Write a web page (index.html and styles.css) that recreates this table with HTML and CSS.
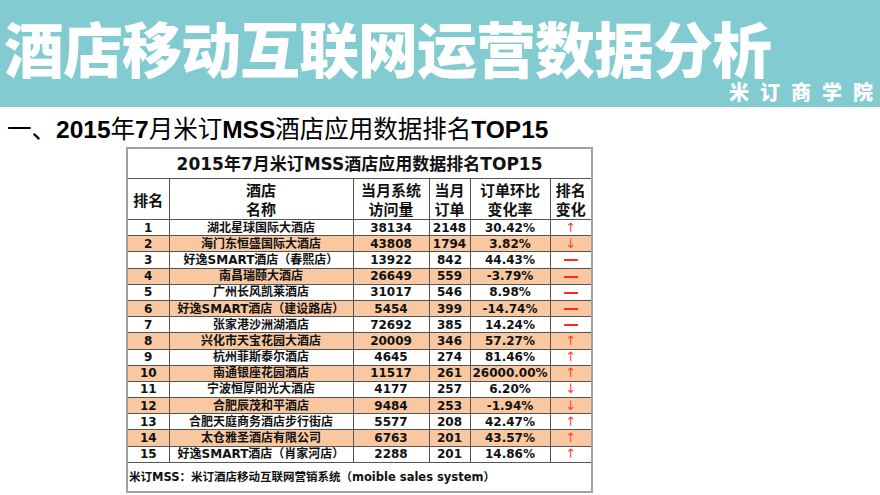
FILE: index.html
```html
<!DOCTYPE html>
<html lang="zh-CN">
<head>
<meta charset="utf-8">
<title>酒店移动互联网运营数据分析</title>
<link rel="stylesheet" href="styles.css">
</head>
<body>
<header class="banner">
  <h1 class="banner-title">酒店移动互联网运营数据分析</h1>
  <div class="banner-brand">米订商学<span class="last">院</span></div>
</header>
<h2 class="section-title">一、<b>2015</b>年<b>7</b>月米订<b>MSS</b>酒店应用数据排名<b>TOP15</b></h2>
<div class="table-wrap">
<table class="rank">
  <colgroup>
    <col class="c-rank"><col class="c-name"><col class="c-visit"><col class="c-order"><col class="c-rate"><col class="c-change">
  </colgroup>
  <thead>
    <tr class="caption-row"><th colspan="6">2015年7月米订MSS酒店应用数据排名TOP15</th></tr>
    <tr class="head-row">
      <th>排名</th><th>酒店<br>名称</th><th>当月系统<br>访问量</th><th>当月<br>订单</th><th>订单环比<br>变化率</th><th>排名<br>变化</th>
    </tr>
  </thead>
  <tbody>
    <tr><td>1</td><td>湖北星球国际大酒店</td><td>38134</td><td>2148</td><td>30.42%</td><td class="chg">↑</td></tr>
    <tr class="alt"><td>2</td><td>海门东恒盛国际大酒店</td><td>43808</td><td>1794</td><td>3.82%</td><td class="chg">↓</td></tr>
    <tr><td>3</td><td>好逸SMART酒店（春熙店）</td><td>13922</td><td>842</td><td>44.43%</td><td class="chg"><span class="dash"></span></td></tr>
    <tr class="alt"><td>4</td><td>南昌瑞颐大酒店</td><td>26649</td><td>559</td><td>-3.79%</td><td class="chg"><span class="dash"></span></td></tr>
    <tr><td>5</td><td>广州长风凯莱酒店</td><td>31017</td><td>546</td><td>8.98%</td><td class="chg"><span class="dash"></span></td></tr>
    <tr class="alt"><td>6</td><td>好逸SMART酒店（建设路店）</td><td>5454</td><td>399</td><td>-14.74%</td><td class="chg"><span class="dash"></span></td></tr>
    <tr><td>7</td><td>张家港沙洲湖酒店</td><td>72692</td><td>385</td><td>14.24%</td><td class="chg"><span class="dash"></span></td></tr>
    <tr class="alt"><td>8</td><td>兴化市天宝花园大酒店</td><td>20009</td><td>346</td><td>57.27%</td><td class="chg">↑</td></tr>
    <tr><td>9</td><td>杭州菲斯泰尔酒店</td><td>4645</td><td>274</td><td>81.46%</td><td class="chg">↑</td></tr>
    <tr class="alt"><td>10</td><td>南通银座花园酒店</td><td>11517</td><td>261</td><td>26000.00%</td><td class="chg">↑</td></tr>
    <tr><td>11</td><td>宁波恒厚阳光大酒店</td><td>4177</td><td>257</td><td>6.20%</td><td class="chg">↓</td></tr>
    <tr class="alt"><td>12</td><td>合肥辰茂和平酒店</td><td>9484</td><td>253</td><td>-1.94%</td><td class="chg">↓</td></tr>
    <tr><td>13</td><td>合肥天庭商务酒店步行街店</td><td>5577</td><td>208</td><td>42.47%</td><td class="chg">↑</td></tr>
    <tr class="alt"><td>14</td><td>太仓雅圣酒店有限公司</td><td>6763</td><td>201</td><td>43.57%</td><td class="chg">↑</td></tr>
    <tr><td>15</td><td>好逸SMART酒店（肖家河店）</td><td>2288</td><td>201</td><td>14.86%</td><td class="chg">↑</td></tr>
  </tbody>
  <tfoot>
    <tr class="note-row"><td colspan="6">米订MSS：米订酒店移动互联网营销系统（moible sales system）</td></tr>
  </tfoot>
</table>
</div>
</body>
</html>
```
FILE: styles.css
```css
html, body {
  margin: 0;
  padding: 0;
  background: #ffffff;
}
body {
  width: 880px;
  height: 495px;
  overflow: hidden;
  font-family: "Liberation Sans", "Noto Sans CJK SC", sans-serif;
  color: #111;
}
.banner {
  height: 107px;
  background: #82cbd1;
  display: flex;
  flex-direction: column;
  box-sizing: border-box;
  padding-top: 18px;
}
.banner-title {
  margin: 0;
  padding-left: 4px;
  font-family: "Noto Sans CJK SC", sans-serif;
  font-weight: 900;
  font-size: 60px;
  line-height: 58px;
  letter-spacing: -1px;
  color: #ffffff;
  white-space: nowrap;
}
.banner-brand {
  align-self: flex-end;
  margin-top: 5px;
  padding-right: 7px;
  font-family: "Noto Sans CJK SC", sans-serif;
  font-weight: 900;
  font-size: 20px;
  line-height: 22px;
  letter-spacing: 11px;
  color: #ffffff;
  white-space: nowrap;
}
.banner-brand .last {
  letter-spacing: 0;
}
.section-title {
  margin: 8px 0 0 0;
  padding-left: 7px;
  font-size: 24.5px;
  line-height: 30px;
  font-weight: normal;
  color: #000;
  white-space: nowrap;
}
.section-title b {
  font-weight: bold;
}
.table-wrap {
  padding-left: 126px;
  margin-top: 2px;
}
.rank {
  border-collapse: collapse;
  table-layout: fixed;
  width: 465px;
  border: 2px solid #a0a0a0;
  font-family: "DejaVu Sans", "Noto Sans CJK SC", sans-serif;
  font-weight: bold;
  color: #111;
}
.c-rank { width: 42px; }
.c-name { width: 184px; }
.c-visit { width: 76px; }
.c-order { width: 41px; }
.c-rate { width: 80px; }
.c-change { width: 42px; }
.rank th, .rank td {
  border: 1px solid #555;
  padding: 0;
  text-align: center;
  white-space: nowrap;
  overflow: hidden;
}
.caption-row th {
  height: 29px;
  font-size: 17px;
  line-height: 20px;
  border-bottom: 1px solid #555;
}
.head-row th {
  height: 40px;
  font-family: "Noto Sans CJK SC", sans-serif;
  font-size: 15px;
  line-height: 19px;
}
.rank tbody td {
  height: 15.2px;
  font-size: 12px;
  line-height: 14px;
}
.rank tbody tr.alt td {
  background: #f9c8a0;
}
.rank td.chg {
  color: #ff4430;
  font-family: "DejaVu Sans", sans-serif;
  font-weight: normal;
  font-size: 13px;
}
.dash {
  display: inline-block;
  width: 14px;
  height: 2px;
  background: #ff2a1e;
  vertical-align: middle;
}
.note-row td {
  height: 28px;
  text-align: left;
  font-size: 11.5px;
  line-height: 16px;
  padding-left: 1px;
  border-top: 1px solid #555;
}
```
